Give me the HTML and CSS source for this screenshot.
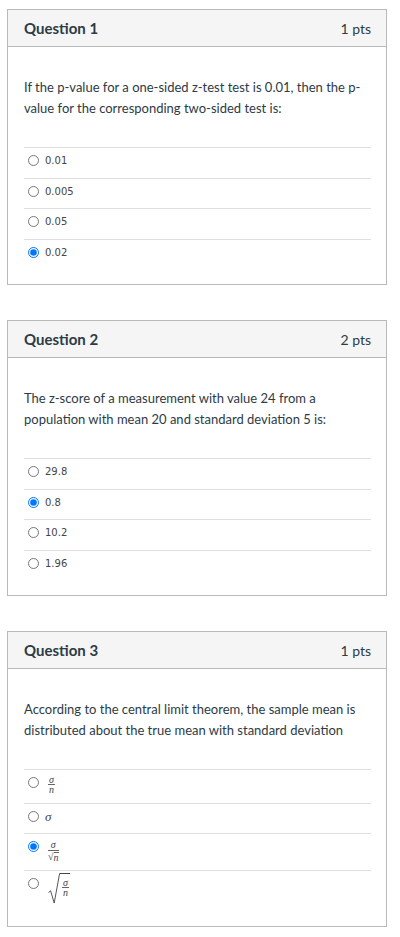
FILE: index.html
```html
<!DOCTYPE html>
<html lang="en">
<head>
<meta charset="utf-8">
<title>Quiz</title>
<link rel="stylesheet" href="styles.css">
</head>
<body>
<main class="quiz">
  <section class="card">
    <header class="card-head">
      <h2 class="q-title">Question 1</h2>
      <span class="q-pts">1 pts</span>
    </header>
    <div class="card-body">
      <p class="q-text">If the p-value for a one-sided z-test test is 0.01, then the p-value for the corresponding two-sided test is:</p>
      <div class="answers">
        <label class="answer"><input type="radio" name="q1"><span class="a-text">0.01</span></label>
        <label class="answer"><input type="radio" name="q1"><span class="a-text">0.005</span></label>
        <label class="answer"><input type="radio" name="q1"><span class="a-text">0.05</span></label>
        <label class="answer"><input type="radio" name="q1" checked><span class="a-text">0.02</span></label>
      </div>
    </div>
  </section>

  <section class="card">
    <header class="card-head">
      <h2 class="q-title">Question 2</h2>
      <span class="q-pts">2 pts</span>
    </header>
    <div class="card-body">
      <p class="q-text">The z-score of a measurement with value 24 from a population with mean 20 and standard deviation 5 is:</p>
      <div class="answers">
        <label class="answer"><input type="radio" name="q2"><span class="a-text">29.8</span></label>
        <label class="answer"><input type="radio" name="q2" checked><span class="a-text">0.8</span></label>
        <label class="answer"><input type="radio" name="q2"><span class="a-text">10.2</span></label>
        <label class="answer"><input type="radio" name="q2"><span class="a-text">1.96</span></label>
      </div>
    </div>
  </section>

  <section class="card">
    <header class="card-head">
      <h2 class="q-title">Question 3</h2>
      <span class="q-pts">1 pts</span>
    </header>
    <div class="card-body">
      <p class="q-text">According to the central limit theorem, the sample mean is distributed about the true mean with standard deviation</p>
      <div class="answers">
        <label class="answer answer-frac"><input type="radio" name="q3">
          <span class="math frac"><span class="num">σ</span><span class="den">n</span></span>
        </label>
        <label class="answer answer-sigma"><input type="radio" name="q3">
          <span class="math sigma">σ</span>
        </label>
        <label class="answer answer-fracroot"><input type="radio" name="q3" checked>
          <span class="math frac frac-wide"><span class="num">σ</span><span class="den"><span class="small-rad">√</span><span class="rad-n">n</span></span></span>
        </label>
        <label class="answer answer-root"><input type="radio" name="q3">
          <span class="math bigroot">
            <svg class="rad-sign" width="12" height="31" viewBox="0 0 12 31"><path d="M0.5 19.5 L2.6 17.8 L6.2 30 L11.6 0.5 L12 0.5" fill="none" stroke="#444" stroke-width="0.9"/></svg>
            <span class="radicand"><span class="frac"><span class="num">σ</span><span class="den">n</span></span></span>
          </span>
        </label>
      </div>
    </div>
  </section>
</main>
</body>
</html>
```

FILE: styles.css
```css
* { box-sizing: border-box; }

body {
  margin: 0;
  background: #ffffff;
  font-family: Lato, "Open Sans", sans-serif;
  color: #2d3b45;
}

.quiz {
  padding: 9px 0 0 7px;
  display: flex;
  flex-direction: column;
  gap: 35px;
}

.card {
  width: 380px;
  border: 1px solid #b9b9b9;
  background: #fff;
}

.card-head {
  height: 37px;
  background: #f5f5f5;
  border-bottom: 1px solid #b9b9b9;
  display: flex;
  align-items: center;
  justify-content: space-between;
  padding: 0 15px 0 16px;
}

.q-title {
  margin: 0;
  font-size: 15px;
  font-weight: 700;
  color: #2d3b45;
}

.q-pts {
  font-size: 14px;
  color: #2d3b45;
}

.card-body {
  padding: 30px 15px 15px 16px;
}

.q-text {
  margin: 0 0 28px;
  font-size: 13px;
  line-height: 21px;
  color: #2d3b45;
}

.answers {
  display: flex;
  flex-direction: column;
}

.answer {
  display: flex;
  align-items: flex-start;
  border-top: 1px solid #dedede;
  padding: 7px 0 10.5px 4px;
}

.answer input {
  width: 11px;
  height: 11px;
  margin: 0;
  flex: none;
  accent-color: #0075ff;
}

.a-text {
  margin-left: 6px;
  font-family: "DejaVu Sans", Verdana, sans-serif;
  font-size: 10px;
  line-height: 12px;
  color: #454545;
}

.math {
  font-family: "Liberation Serif", "Times New Roman", serif;
  font-style: italic;
  color: #444;
}

.frac {
  display: inline-flex;
  flex-direction: column;
  align-items: center;
}

.frac .num {
  font-size: 10px;
  line-height: 9px;
  padding: 0 1px;
  border-bottom: 0.8px solid #666;
  align-self: stretch;
  text-align: center;
}

.frac .den {
  font-size: 10px;
  line-height: 10px;
}

.answer-frac { padding-bottom: 8px; }
.answer-frac .math { margin: -2px 0 0 9px; }

.answer-sigma { padding-bottom: 10px; }
.sigma {
  margin-left: 6px;
  font-size: 13px;
  line-height: 12px;
}

.answer-fracroot { padding-bottom: 8px; }
.answer-fracroot .math { margin: -2px 0 0 9px; }
.frac-wide .num { line-height: 11px; }
.frac-wide .den {
  display: inline-flex;
  align-items: flex-end;
  line-height: 11px;
}
.small-rad {
  font-style: normal;
  font-size: 10px;
}
.rad-n {
  border-top: 0.8px solid #666;
  line-height: 9px;
}

.answer-root { padding-bottom: 7px; }
.bigroot {
  display: inline-flex;
  align-items: stretch;
  margin: -5px 0 0 9px;
}
.rad-sign { display: block; flex: none; }
.radicand {
  border-top: 0.9px solid #444;
  padding: 4px 1px 0 2px;
  display: flex;
}
```
